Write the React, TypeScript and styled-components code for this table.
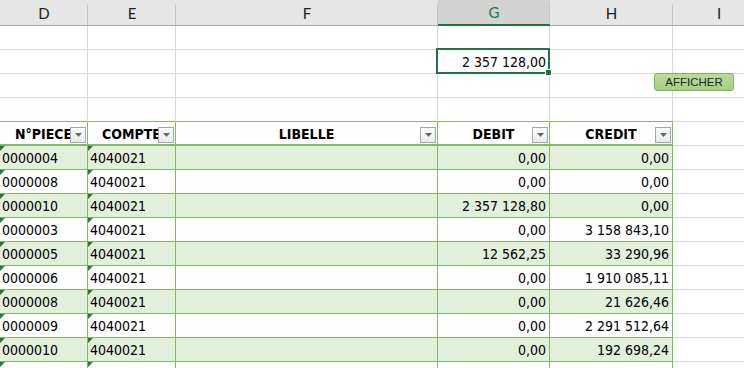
import React from 'react'
import styled, { createGlobalStyle, css } from 'styled-components'

const GREEN_LINE = '#84b862'
const GREY_LINE = '#d9d9d9'
const STRIPE = '#e2efda'
const EXCEL_GREEN = '#217346'

const COLUMNS = ['D', 'E', 'F', 'G', 'H', 'I']
const WIDTHS = '88px 88px 262px 112px 123px 92px'

type Entry = [string, string, string, string, string]

const entries: Entry[] = [
  ['0000004', '4040021', '', '0,00', '0,00'],
  ['0000008', '4040021', '', '0,00', '0,00'],
  ['0000010', '4040021', '', '2 357 128,80', '0,00'],
  ['0000003', '4040021', '', '0,00', '3 158 843,10'],
  ['0000005', '4040021', '', '12 562,25', '33 290,96'],
  ['0000006', '4040021', '', '0,00', '1 910 085,11'],
  ['0000008', '4040021', '', '0,00', '21 626,46'],
  ['0000009', '4040021', '', '0,00', '2 291 512,64'],
  ['0000010', '4040021', '', '0,00', '192 698,24'],
]

const headers = ['N°PIECE', 'COMPTE', 'LIBELLE', 'DEBIT', 'CREDIT']

export default function App () {
  return (
    <>
      <GlobalStyle />
      <Sheet>
        <ColumnBar>
          { COLUMNS.map(col => (
            <ColumnLetter key={col} $active={col === 'G'}>{ col }</ColumnLetter>
          )) }
        </ColumnBar>

        <Row>
          { COLUMNS.map(col => <Cell key={col} />) }
        </Row>
        <Row>
          <Cell />
          <Cell />
          <Cell />
          <SelectedCell $align='right'>2 357 128,00</SelectedCell>
          <Cell />
          <Cell />
        </Row>
        <Row>
          { COLUMNS.map(col => <Cell key={col} />) }
        </Row>
        <Row>
          { COLUMNS.map((col, i) => <Cell key={col} $bottom={i < 5 ? 'green' : 'grey'} />) }
        </Row>

        <HeaderRow>
          { headers.map(label => (
            <HeaderCell key={label}>
              <HeaderLabel>{ label }</HeaderLabel>
              <FilterButton>
                <svg width='7' height='4' viewBox='0 0 7 4'>
                  <path d='M0 0h7L3.5 4z' fill='#5f6b5f' />
                </svg>
              </FilterButton>
            </HeaderCell>
          )) }
          <Cell $tall />
        </HeaderRow>

        { entries.map((entry, r) => (
          <Row key={r}>
            { entry.map((value, c) => (
              <Cell
                key={c}
                $table
                $stripe={r % 2 === 0}
                $align={c >= 3 ? 'right' : 'left'}
                $flag={c < 2}
              >
                { value }
              </Cell>
            )) }
            <Cell />
          </Row>
        )) }

        <Row>
          { COLUMNS.map((col, c) => (
            <Cell key={col} $table={c < 5} $flag={c < 2} />
          )) }
        </Row>
      </Sheet>
      <ShowButton>AFFICHER</ShowButton>
    </>
  )
}

const GlobalStyle = createGlobalStyle`
  html, body {
    margin: 0;
    padding: 0;
    background: #fff;
    overflow: hidden;
  }
  body {
    width: 744px;
    height: 368px;
    position: relative;
  }
`

const Sheet = styled.div`
  width: 744px;
  height: 368px;
  overflow: hidden;
  font-family: "DejaVu Sans Condensed", "DejaVu Sans", sans-serif;
  font-stretch: condensed;
  font-size: 14px;
  color: #000;
`

const ColumnBar = styled.div`
  display: grid;
  grid-template-columns: ${WIDTHS};
  height: 26px;
  background: #e6e6e6;
  border-bottom: 1px solid #ababab;
  box-sizing: border-box;
`

const ColumnLetter = styled.div<{ $active?: boolean }>`
  display: flex;
  align-items: center;
  justify-content: center;
  position: relative;
  font-family: Lato, "Liberation Sans", sans-serif;
  font-size: 15px;
  color: #222;
  box-sizing: border-box;

  &::after {
    content: '';
    position: absolute;
    right: 0;
    top: 4px;
    bottom: 0;
    width: 1px;
    background: #c6c6c6;
  }

  ${p => p.$active && css`
    background: #d2d2d2;
    color: ${EXCEL_GREEN};
    border-bottom: 2px solid ${EXCEL_GREEN};
    margin-bottom: -1px;
  `}
`

const Row = styled.div`
  display: grid;
  grid-template-columns: ${WIDTHS};
  height: 24px;
`

const HeaderRow = styled(Row)`
  height: 24px;
`

const Cell = styled.div<{
  $table?: boolean
  $stripe?: boolean
  $align?: 'left' | 'right'
  $flag?: boolean
  $bottom?: 'green' | 'grey'
  $tall?: boolean
}>`
  position: relative;
  box-sizing: border-box;
  display: flex;
  align-items: center;
  justify-content: ${p => (p.$align === 'right' ? 'flex-end' : 'flex-start')};
  padding: 1px 3px 0 2px;
  white-space: nowrap;
  overflow: hidden;
  border-right: 1px solid ${p => (p.$table ? GREEN_LINE : GREY_LINE)};
  border-bottom: 1px solid ${p => (p.$table || p.$bottom === 'green' ? GREEN_LINE : GREY_LINE)};
  background: ${p => (p.$stripe ? STRIPE : '#fff')};

  ${p => p.$flag && css`
    &::before {
      content: '';
      position: absolute;
      left: 0;
      top: 0;
      border-top: 5px solid #1e7a3c;
      border-right: 5px solid transparent;
    }
  `}
`

const SelectedCell = styled(Cell)`
  overflow: visible;
  z-index: 1;

  &::after {
    content: '';
    position: absolute;
    left: -2px;
    top: -2px;
    right: -1px;
    bottom: -1px;
    border: 2px solid ${EXCEL_GREEN};
    pointer-events: none;
  }

  &::before {
    content: '';
    position: absolute;
    right: -3px;
    bottom: -3px;
    width: 5px;
    height: 5px;
    background: ${EXCEL_GREEN};
    border: 1px solid #fff;
    z-index: 2;
  }
`

const HeaderCell = styled.div`
  position: relative;
  box-sizing: border-box;
  display: flex;
  align-items: center;
  justify-content: center;
  padding-top: 1px;
  overflow: hidden;
  background: #fff;
  border-right: 1px solid ${GREEN_LINE};
  border-bottom: 2px solid ${GREEN_LINE};
`

const HeaderLabel = styled.span`
  font-weight: bold;
  white-space: nowrap;
`

const FilterButton = styled.div`
  position: absolute;
  right: 1px;
  bottom: 1px;
  width: 16px;
  height: 16px;
  box-sizing: border-box;
  display: flex;
  align-items: center;
  justify-content: center;
  border: 1px solid #a6a6a6;
  background: linear-gradient(#fbfbfb, #e9ecee);
`

const ShowButton = styled.div`
  position: absolute;
  left: 654px;
  top: 73px;
  width: 80px;
  height: 18px;
  box-sizing: border-box;
  display: flex;
  align-items: center;
  justify-content: center;
  border: 1px solid #7fb35a;
  border-radius: 3px;
  background: linear-gradient(#b9dc9e, #a3cf84);
  font-family: "Liberation Sans", Arial, sans-serif;
  font-size: 11.5px;
  color: #1d2a14;
`
